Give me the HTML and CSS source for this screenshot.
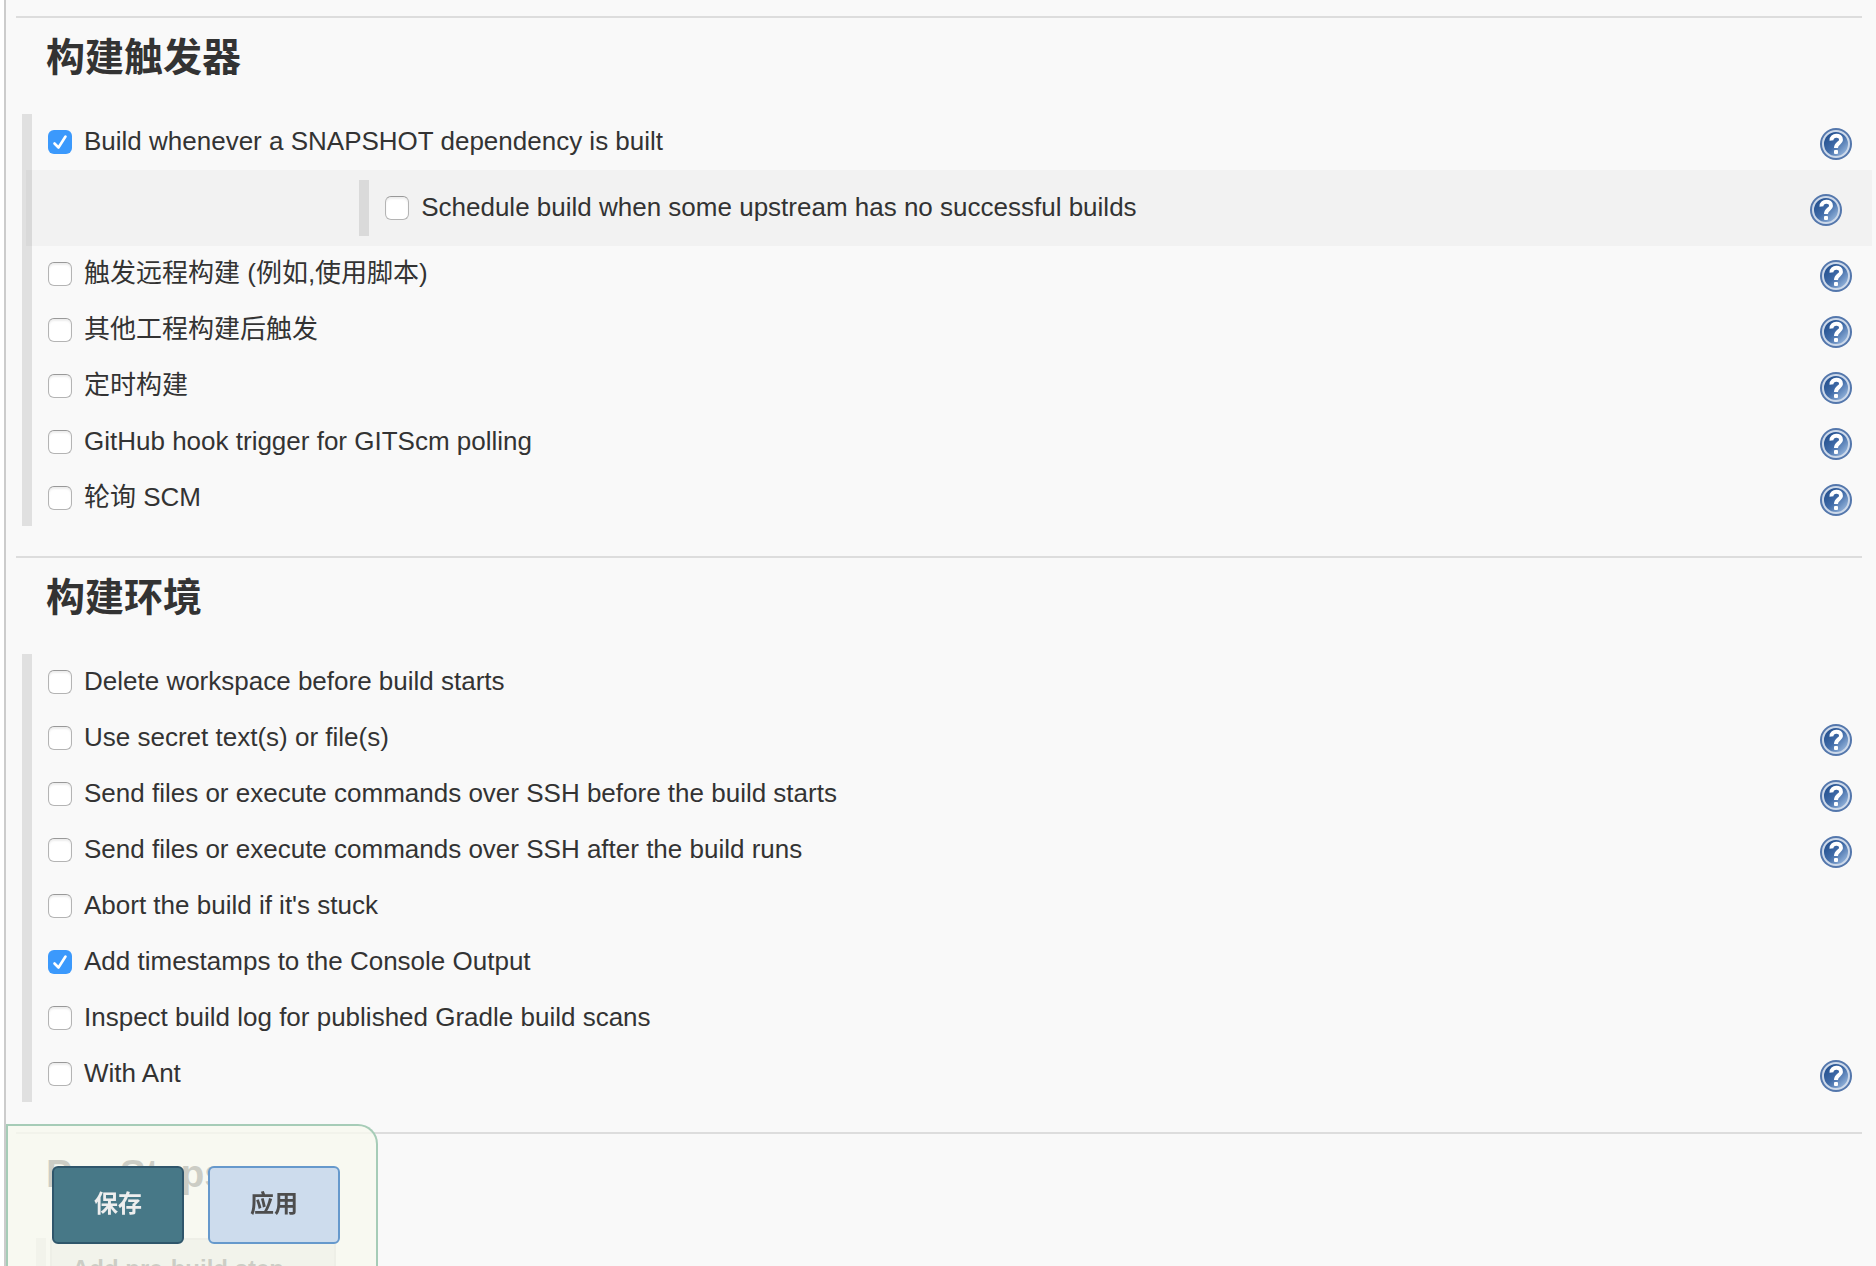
FILE: index.html
```html
<!DOCTYPE html>
<html lang="zh-CN">
  <head>
    <meta charset="UTF-8" />
    <meta name="viewport" content="width=device-width, initial-scale=1.0" />
    <title>构建配置</title>
    <link rel="stylesheet" href="styles.css">
  </head>
  <body>
    <!-- 帮助图标 -->
    <svg class="defs" width="0" height="0" aria-hidden="true">
      <defs>
        <linearGradient id="help-fill" x1="0" y1="0" x2="1" y2="1">
          <stop offset="0.15" stop-color="#24508f" />
          <stop offset="0.5" stop-color="#416ca8" />
          <stop offset="0.9" stop-color="#9dbbe0" />
        </linearGradient>
        <symbol id="help-icon" viewBox="0 0 32 32">
          <circle cx="16" cy="16" r="16" fill="#5477ac" />
          <circle cx="16" cy="16" r="13" fill="url(#help-fill)" stroke="#cdd9ea" stroke-width="2" />
          <path d="M11.5 12.5C11 6.5 21.5 6 21 12C20.8 15.5 16 15 16 20" fill="none" stroke="#fff" stroke-width="4" />
          <rect x="14" y="22" width="4" height="4" rx="1" fill="#fff" />
        </symbol>
      </defs>
    </svg>

    <form class="config">
      <section class="section">
        <h2>构建触发器</h2>
        <div class="options">
          <div class="option">
            <input type="checkbox" id="snapshot" checked />
            <label for="snapshot">Build whenever a SNAPSHOT dependency is built</label>
            <a class="help" href="#" aria-label="帮助"><svg><use href="#help-icon" /></svg></a>
          </div>
          <div class="nested">
            <div class="option">
              <input type="checkbox" id="upstream" />
              <label for="upstream">Schedule build when some upstream has no successful builds</label>
              <a class="help" href="#" aria-label="帮助"><svg><use href="#help-icon" /></svg></a>
            </div>
          </div>
          <div class="option">
            <input type="checkbox" id="remote" />
            <label for="remote">触发远程构建 (例如,使用脚本)</label>
            <a class="help" href="#" aria-label="帮助"><svg><use href="#help-icon" /></svg></a>
          </div>
          <div class="option">
            <input type="checkbox" id="after" />
            <label for="after">其他工程构建后触发</label>
            <a class="help" href="#" aria-label="帮助"><svg><use href="#help-icon" /></svg></a>
          </div>
          <div class="option">
            <input type="checkbox" id="timer" />
            <label for="timer">定时构建</label>
            <a class="help" href="#" aria-label="帮助"><svg><use href="#help-icon" /></svg></a>
          </div>
          <div class="option">
            <input type="checkbox" id="github" />
            <label for="github">GitHub hook trigger for GITScm polling</label>
            <a class="help" href="#" aria-label="帮助"><svg><use href="#help-icon" /></svg></a>
          </div>
          <div class="option">
            <input type="checkbox" id="scm" />
            <label for="scm">轮询 SCM</label>
            <a class="help" href="#" aria-label="帮助"><svg><use href="#help-icon" /></svg></a>
          </div>
        </div>
      </section>

      <section class="section">
        <h2>构建环境</h2>
        <div class="options">
          <div class="option">
            <input type="checkbox" id="clean" />
            <label for="clean">Delete workspace before build starts</label>
          </div>
          <div class="option">
            <input type="checkbox" id="secret" />
            <label for="secret">Use secret text(s) or file(s)</label>
            <a class="help" href="#" aria-label="帮助"><svg><use href="#help-icon" /></svg></a>
          </div>
          <div class="option">
            <input type="checkbox" id="ssh-before" />
            <label for="ssh-before">Send files or execute commands over SSH before the build starts</label>
            <a class="help" href="#" aria-label="帮助"><svg><use href="#help-icon" /></svg></a>
          </div>
          <div class="option">
            <input type="checkbox" id="ssh-after" />
            <label for="ssh-after">Send files or execute commands over SSH after the build runs</label>
            <a class="help" href="#" aria-label="帮助"><svg><use href="#help-icon" /></svg></a>
          </div>
          <div class="option">
            <input type="checkbox" id="abort" />
            <label for="abort">Abort the build if it's stuck</label>
          </div>
          <div class="option">
            <input type="checkbox" id="timestamps" checked />
            <label for="timestamps">Add timestamps to the Console Output</label>
          </div>
          <div class="option">
            <input type="checkbox" id="gradle" />
            <label for="gradle">Inspect build log for published Gradle build scans</label>
          </div>
          <div class="option">
            <input type="checkbox" id="ant" />
            <label for="ant">With Ant</label>
            <a class="help" href="#" aria-label="帮助"><svg><use href="#help-icon" /></svg></a>
          </div>
        </div>
      </section>

      <section class="section">
        <h2>Pre Steps</h2>
        <div class="steps">
          <button type="button" class="add-step">Add pre-build step</button>
        </div>
      </section>

      <!-- 底部固定按钮 -->
      <div class="bottom-bar">
        <button type="submit" class="btn btn-save">保存</button>
        <button type="button" class="btn btn-apply">应用</button>
      </div>
    </form>
  </body>
</html>
```

FILE: styles.css
```css
* {
  box-sizing: border-box;
}

body {
  margin: 0;
  height: 100vh;
  overflow: hidden;
  background-color: #fff;
  color: #333;
  font-family: "Liberation Sans", "Noto Sans CJK SC", sans-serif;
  font-size: 26px;
}

.defs {
  position: absolute;
}

.config {
  height: 100%;
  margin-left: 4px;
  padding: 16px 4px 0 10px;
  border-left: 2px solid #ccc;
  background-color: #f9f9f9;
  overflow: hidden;
}

.section {
  padding-bottom: 30px;
}

.section::before {
  content: "";
  display: block;
  height: 2px;
  margin-right: 10px;
  background-color: #ddd;
}

h2 {
  margin: 0;
  padding: 16px 30px 32px;
  font-size: 39px;
  line-height: 48px;
}

.options {
  margin-left: 6px;
  border-left: 10px solid #e0e0e0;
}

.option {
  display: flex;
  align-items: center;
  height: 56px;
  padding: 0 20px 0 16px;
}

.option label {
  margin-left: 12px;
  padding-bottom: 2px;
  line-height: 32px;
}

.option input {
  appearance: none;
  width: 24px;
  height: 24px;
  margin: 0;
  border: 1px solid #b4b4b4;
  border-top-color: #999;
  border-radius: 6px;
  background: #fff;
  box-shadow: inset 0 2px 2px #eee;
}

.option input:checked {
  border: 0;
  background: #3b99fc url("data:image/svg+xml,%3Csvg xmlns='http://www.w3.org/2000/svg' viewBox='0 0 24 24'%3E%3Cpath d='M6.5 13.5L10.5 17.5L17.5 6.5' fill='none' stroke='%23fff' stroke-width='2.6' stroke-linecap='round' stroke-linejoin='round'/%3E%3C/svg%3E") center / 24px no-repeat;
  box-shadow: none;
}

.help {
  margin-left: auto;
  padding-top: 4px;
}

.help svg {
  display: block;
  width: 32px;
  height: 32px;
}

.nested {
  margin-left: -6px;
  padding: 10px 10px 10px 18%;
  background-color: rgba(0, 0, 0, 0.027);
}

.nested .option {
  margin-left: 2px;
  border-left: 10px solid #dadada;
}

.steps {
  margin: 8px 0 0 20px;
  border-left: 10px solid #e0e0e0;
  padding: 0 0 0 4px;
}

.add-step {
  height: 62px;
  padding: 0 50px 0 20px;
  border: 2px solid #ccc;
  border-radius: 4px;
  background-color: #e0e0e0;
  color: #333;
  font: bold 24px/32px "Liberation Sans", sans-serif;
}

.bottom-bar {
  position: fixed;
  left: 6px;
  bottom: 0;
  display: flex;
  gap: 24px;
  padding: 40px 36px 22px 44px;
  border: 2px solid #a6ccb7;
  border-bottom: 0;
  border-top-right-radius: 20px;
  background-color: rgba(247, 249, 238, 0.78);
}

.btn {
  width: 132px;
  height: 78px;
  padding: 0 6px 2px;
  border: 2px solid;
  border-radius: 6px;
  font: bold 24px/32px "Liberation Sans", "Noto Sans CJK SC", sans-serif;
}

.btn-save {
  border-color: #2f566b;
  background-color: #477887;
  color: #eee;
}

.btn-apply {
  border-color: #6699cc;
  background-color: #cddced;
  color: #4d4d4d;
}
```
